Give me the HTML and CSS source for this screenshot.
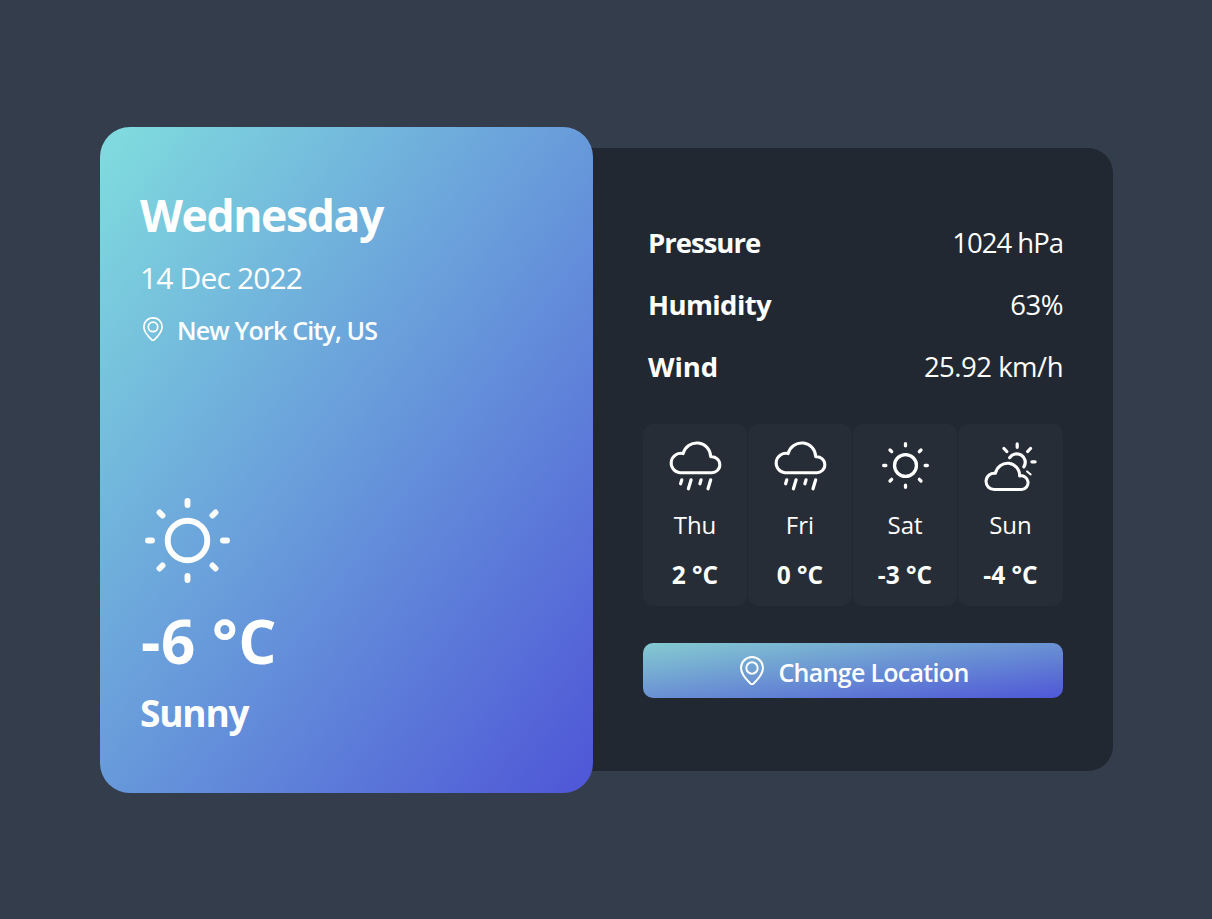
FILE: index.html
```html
<!DOCTYPE html>
<html lang="en">
<head>
<meta charset="utf-8">
<title>Weather</title>
<link rel="stylesheet" href="styles.css">
</head>
<body>
<svg class="defs" aria-hidden="true">
  <symbol id="sun" viewBox="-42.5 -42.5 85 85">
    <circle r="19.8"/>
    <path d="M0-39.5v4M0 39.5v-4M-39.5 0h4M39.5 0h-4M-28-28l3 3M28-28l-3 3M-28 28l3-3M28 28l-3-3"/>
  </symbol>
  <symbol id="rain" viewBox="29.3 22.4 52 50" overflow="visible">
    <path class="line" d="M40.3 53.1A9.7 9.7 0 1 1 43.4 34A14 14 0 0 1 71 37.2A8 8 0 1 1 71.5 53.1Z"/>
    <path d="M42.1 60.2l-1.2 4M51.4 60.2l-2.7 9M61.4 60.2l-1.2 4M71 60.2l-2.7 9"/>
  </symbol>
  <symbol id="cloud-sun" viewBox="134.300 22 52 50" overflow="visible">
    <path class="line" d="M143.8 69.6A8.2 8.2 0 1 1 144.8 53.3A12.15 12.15 0 0 1 168.9 56A6.9 6.9 0 1 1 171 69.6Z"/>
    <path d="M159 37.7A8.3 8.3 0 1 1 173.2 46.8M166.5 23.9v3.4M179.8 28.5l-2.8 3M153.3 28.5l2.8 3M181.2 41.8h3.2"/>
    <path class="thin" d="M176.4 51.4l3.6 3"/>
  </symbol>
  <symbol id="pin" viewBox="0 0 24 29">
    <path d="M12 1C5.9 1 1 5.9 1 12c0 5.500 5.500 11.800 9.900 15.900q1.100.9 2.200 0C17.500 23.800 23 17.500 23 12 23 5.900 18.100 1 12 1Z"/>
    <circle cx="12" cy="12" r="5.700"/>
  </symbol>
</svg>
<main class="widget">
  <section class="today">
    <header>
      <h1 class="day">Wednesday</h1>
      <p class="date">14 Dec 2022</p>
      <p class="place"><svg class="icon pin-small"><use href="#pin"/></svg><span>New York City, US</span></p>
    </header>
    <div class="now">
      <svg class="icon sun-large"><use href="#sun"/></svg>
      <p class="temp">-6 °C</p>
      <p class="summary">Sunny</p>
    </div>
  </section>
  <section class="details">
    <dl class="facts">
      <div class="fact"><dt class="tight">Pressure</dt><dd class="tight">1024 hPa</dd></div>
      <div class="fact"><dt>Humidity</dt><dd>63%</dd></div>
      <div class="fact"><dt class="loose">Wind</dt><dd>25.92 km/h</dd></div>
    </dl>
    <ul class="week">
      <li class="slot"><svg class="icon weather"><use href="#rain"/></svg><span class="name">Thu</span><b class="deg">2 °C</b></li>
      <li class="slot"><svg class="icon weather"><use href="#rain"/></svg><span class="name">Fri</span><b class="deg">0 °C</b></li>
      <li class="slot"><svg class="icon weather weather-sun"><use href="#sun"/></svg><span class="name">Sat</span><b class="deg">-3 °C</b></li>
      <li class="slot"><svg class="icon weather"><use href="#cloud-sun"/></svg><span class="name">Sun</span><b class="deg">-4 °C</b></li>
    </ul>
    <button class="change"><svg class="icon pin-large"><use href="#pin"/></svg><span>Change Location</span></button>
  </section>
</main>
</body>
</html>
```
FILE: styles.css
```css
* { box-sizing: border-box; margin: 0; padding: 0; }
body {
  height: 919px;
  background: #343d4b;
  color: #fff;
  font-family: "Segoe UI", "Open Sans", "Noto Sans", sans-serif;
  font-weight: 430;
}
.defs { position: absolute; width: 0; height: 0; }
.icon { display: block; flex: none; overflow: visible; fill: none; stroke: #fff; stroke-linecap: round; stroke-linejoin: round; }
.widget { display: flex; align-items: flex-start; padding: 127px 99px 0 100px; }
.today {
  width: 493px;
  height: 666px;
  padding: 58px 40px 0;
  border-radius: 30px;
  background: linear-gradient(to bottom right, #7fd9de 3%, #4f57d7 99%);
  z-index: 1;
}
.today header { height: 313px; }
.day { font-size: 44.5px; line-height: 60px; letter-spacing: -1.4px; }
.date { margin-top: 13px; font-size: 30px; line-height: 40px; letter-spacing: -.85px; }
.place { display: flex; align-items: center; gap: 13px; margin-top: 15px; padding-left: 3px; font-size: 25px; font-weight: 600; line-height: 34px; letter-spacing: -.82px; }
.place span { padding-left: 1px; }
.pin-small { width: 20px; height: 24px; margin-top: -3px; stroke-width: 2.1; }
.sun-large { width: 85px; height: 85px; margin-left: 5px; stroke-width: 5.9; }
.temp { margin-top: 18px; padding-left: 1px; font-size: 60px; font-weight: 700; line-height: 80px; letter-spacing: .6px; }
.summary { margin-top: 8px; font-size: 37px; font-weight: 700; line-height: 48px; letter-spacing: -1.2px; }
.details {
  width: 550px;
  height: 623px;
  margin: 21px 0 0 -30px;
  padding: 75px 50px 0 80px;
  border-radius: 0 25px 25px 0;
  background: #222831;
}
.fact { display: flex; justify-content: space-between; height: 62px; padding: 0 0 0 5px; font-size: 27.5px; line-height: 40px; }
.fact dt { font-weight: 700; letter-spacing: -.6px; }
.fact dd { letter-spacing: -.5px; }
.fact .tight { letter-spacing: -1px; }
.fact .loose { letter-spacing: -.1px; }
.week { display: grid; grid-template-columns: 104px 104px 104px 105px; gap: 1px; height: 182px; margin-top: 15px; list-style: none; }
.slot { display: flex; flex-direction: column; align-items: center; padding-top: 18px; border-radius: 10px; background: #272d36; }
.weather { width: 52px; height: 50px; stroke-width: 3.2; }
.weather-sun { width: 47px; height: 47px; margin-bottom: 3px; stroke-width: 6; }
#rain .line, #cloud-sun .line { stroke-width: 3; }
#cloud-sun .thin { stroke-width: 2; }
.name { margin-top: 17px; font-size: 24px; line-height: 32px; }
.deg { margin-top: 18px; font-size: 24.5px; line-height: 32px; letter-spacing: 0; }
.change {
  display: flex;
  align-items: center;
  justify-content: center;
  gap: 14px;
  width: 420px;
  height: 55px;
  margin-top: 37px;
  padding-left: 3px;
  border: 0;
  border-radius: 10px;
  background: linear-gradient(to bottom right, #84cbd0, #4f57d7);
  color: #fff;
  font: 600 25px/34px "Segoe UI", "Open Sans", "Noto Sans", sans-serif;
  letter-spacing: -.7px;
}
.change span { margin-top: 3px; }
.pin-large { width: 24px; height: 29px; stroke-width: 2; }
```
